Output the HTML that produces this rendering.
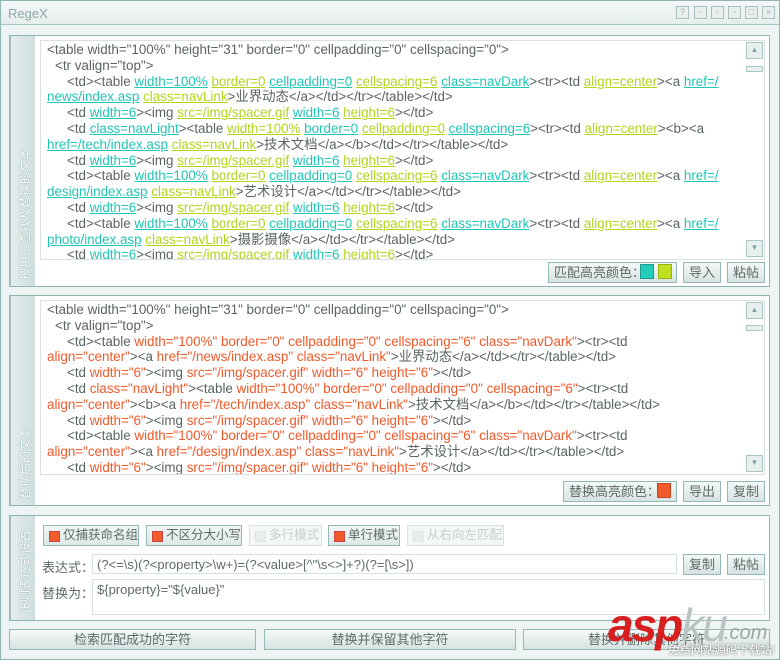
<!DOCTYPE html>
<html><head><meta charset="utf-8"><style>
*{margin:0;padding:0;box-sizing:border-box}
html,body{width:780px;height:660px;overflow:hidden}
body{background:#eef4f3;font-family:"Liberation Sans","Noto Sans CJK SC",sans-serif;color:#5a6462;position:relative}
.win{position:absolute;left:0;top:0;width:780px;height:660px;border:1px solid #8fb5b2}
.title{position:absolute;left:1px;top:1px;width:778px;height:24px;background:linear-gradient(#f4f8f8,#e6eeed);border-bottom:1px solid #a9c6c3;font-size:13px;color:#8aa8a6;padding:5px 7px}
.tb{position:absolute;top:6px;width:13px;height:13px;border:1px solid #a9bfbd;background:#e8efee;font-size:9px;color:#9fb3b1;text-align:center;line-height:11px}
.panel{position:absolute;left:9px;width:761px;background:#fff;border:1px solid #8fb5b2}
.side{position:absolute;left:0;top:0;bottom:0;width:25px;background:linear-gradient(90deg,#cfdedd,#e4eded);border-right:1px solid #a9c6c3;color:#fff;font-size:12px;writing-mode:vertical-rl;text-orientation:sideways;transform:rotate(180deg);text-align:left;padding-top:6px;padding-right:5px;text-shadow:0 0 1px #8aa,0 0 1px #8aa;white-space:nowrap}
.ta{position:absolute;background:#fff;border:1px solid #d5e2e1;overflow:hidden;font-size:13.4px;line-height:15.8px;padding:1px 0 0 6px}
.ta div{white-space:nowrap}
.i1{padding-left:8px}.i2{padding-left:20px}
.c{color:#22c6b6;text-decoration:underline}
.l{color:#b3d41c;text-decoration:underline}
.o{color:#f2592a}
.sb{position:absolute;right:4px;width:18px;background:#fff}
.sbtn{position:absolute;width:17px;height:17px;border:1px solid #a9c6c3;background:#e8f0ef}
.btn{position:absolute;height:21px;border:1px solid #94b8b5;background:linear-gradient(#f4f8f8,#d6e3e2);font-size:13px;color:#5e6b69;text-align:center;line-height:19px;white-space:nowrap}
.chk{position:absolute;top:525px;height:21px;border:1px solid #94b8b5;background:linear-gradient(#f1f6f6,#dde9e8);font-size:12.5px;line-height:19px;padding-left:19px;color:#5e6b69;white-space:nowrap;overflow:hidden}
.chk::before{content:"";position:absolute;left:5px;top:5px;width:9px;height:9px;background:#f15a2a;border:1px solid #c44}
.chk.d{border-color:#d5e2e1;background:#f3f7f7;color:#c4cfce}
.chk.d::before{background:#e8eeee;border-color:#dde5e5}
.lbl{position:absolute;font-size:13px;color:#5e6b69;white-space:nowrap}
</style></head><body>
<div class="win"></div>
<div class="title">RegeX</div>
<div class="tb" style="left:676px">?</div>
<div class="tb" style="left:694px">-</div>
<div class="tb" style="left:711px">▫</div>
<div class="tb" style="left:728px">-</div>
<div class="tb" style="left:745px">□</div>
<div class="tb" style="left:762px">×</div>

<div class="panel" style="top:35px;height:252px"><div class="side">被用于查找及替换的文本</div></div>
<div class="ta" style="left:40px;top:40px;width:725px;height:220px">
<div>&lt;table width="100%" height="31" border="0" cellpadding="0" cellspacing="0"&gt;</div>
<div class="i1">&lt;tr valign="top"&gt;</div>
<div class="i2">&lt;td&gt;&lt;table <span class="c">width=100%</span> <span class="l">border=0</span> <span class="c">cellpadding=0</span> <span class="l">cellspacing=6</span> <span class="c">class=navDark</span>&gt;&lt;tr&gt;&lt;td <span class="l">align=center</span>&gt;&lt;a <span class="c">href=/</span></div>
<div><span class="c">news/index.asp</span> <span class="l">class=navLink</span>&gt;业界动态&lt;/a&gt;&lt;/td&gt;&lt;/tr&gt;&lt;/table&gt;&lt;/td&gt;</div>
<div class="i2">&lt;td <span class="c">width=6</span>&gt;&lt;img <span class="l">src=/img/spacer.gif</span> <span class="c">width=6</span> <span class="l">height=6</span>&gt;&lt;/td&gt;</div>
<div class="i2">&lt;td <span class="c">class=navLight</span>&gt;&lt;table <span class="l">width=100%</span> <span class="c">border=0</span> <span class="l">cellpadding=0</span> <span class="c">cellspacing=6</span>&gt;&lt;tr&gt;&lt;td <span class="l">align=center</span>&gt;&lt;b&gt;&lt;a</div>
<div><span class="c">href=/tech/index.asp</span> <span class="l">class=navLink</span>&gt;技术文档&lt;/a&gt;&lt;/b&gt;&lt;/td&gt;&lt;/tr&gt;&lt;/table&gt;&lt;/td&gt;</div>
<div class="i2">&lt;td <span class="c">width=6</span>&gt;&lt;img <span class="l">src=/img/spacer.gif</span> <span class="c">width=6</span> <span class="l">height=6</span>&gt;&lt;/td&gt;</div>
<div class="i2">&lt;td&gt;&lt;table <span class="c">width=100%</span> <span class="l">border=0</span> <span class="c">cellpadding=0</span> <span class="l">cellspacing=6</span> <span class="c">class=navDark</span>&gt;&lt;tr&gt;&lt;td <span class="l">align=center</span>&gt;&lt;a <span class="c">href=/</span></div>
<div><span class="c">design/index.asp</span> <span class="l">class=navLink</span>&gt;艺术设计&lt;/a&gt;&lt;/td&gt;&lt;/tr&gt;&lt;/table&gt;&lt;/td&gt;</div>
<div class="i2">&lt;td <span class="c">width=6</span>&gt;&lt;img <span class="l">src=/img/spacer.gif</span> <span class="c">width=6</span> <span class="l">height=6</span>&gt;&lt;/td&gt;</div>
<div class="i2">&lt;td&gt;&lt;table <span class="c">width=100%</span> <span class="l">border=0</span> <span class="c">cellpadding=0</span> <span class="l">cellspacing=6</span> <span class="c">class=navDark</span>&gt;&lt;tr&gt;&lt;td <span class="l">align=center</span>&gt;&lt;a <span class="c">href=/</span></div>
<div><span class="c">photo/index.asp</span> <span class="l">class=navLink</span>&gt;摄影摄像&lt;/a&gt;&lt;/td&gt;&lt;/tr&gt;&lt;/table&gt;&lt;/td&gt;</div>
<div class="i2">&lt;td <span class="c">width=6</span>&gt;&lt;img <span class="l">src=/img/spacer.gif</span> <span class="c">width=6</span> <span class="l">height=6</span>&gt;&lt;/td&gt;</div>
</div>
<div class="sb" style="left:745px;top:41px;height:218px"></div>
<div class="sbtn" style="left:746px;top:42px;font-size:8px;text-align:center;color:#7fa5a2;line-height:14px">▲</div>
<div class="sbtn" style="left:746px;top:66px;height:6px"></div>
<div class="sbtn" style="left:746px;top:240px;font-size:8px;text-align:center;color:#7fa5a2;line-height:14px">▼</div>
<div class="btn" style="left:548px;top:262px;width:129px;text-align:left;padding-left:5px">匹配高亮颜色：</div>
<div style="position:absolute;left:640px;top:264px;width:14px;height:15px;background:#22ccb8;border:1px solid #1a9c8e"></div>
<div style="position:absolute;left:658px;top:264px;width:14px;height:15px;background:#c0e020;border:1px solid #98b010"></div>
<div class="btn" style="left:683px;top:262px;width:38px">导入</div>
<div class="btn" style="left:727px;top:262px;width:38px">粘帖</div>

<div class="panel" style="top:295px;height:211px"><div class="side">替换后的文本</div></div>
<div class="ta" style="left:40px;top:300px;width:725px;height:175px">
<div>&lt;table width="100%" height="31" border="0" cellpadding="0" cellspacing="0"&gt;</div>
<div class="i1">&lt;tr valign="top"&gt;</div>
<div class="i2">&lt;td&gt;&lt;table <span class="o">width="100%" border="0" cellpadding="0" cellspacing="6" class="navDark"</span>&gt;&lt;tr&gt;&lt;td</div>
<div><span class="o">align="center"</span>&gt;&lt;a <span class="o">href="/news/index.asp" class="navLink"</span>&gt;业界动态&lt;/a&gt;&lt;/td&gt;&lt;/tr&gt;&lt;/table&gt;&lt;/td&gt;</div>
<div class="i2">&lt;td <span class="o">width="6"</span>&gt;&lt;img <span class="o">src="/img/spacer.gif" width="6" height="6"</span>&gt;&lt;/td&gt;</div>
<div class="i2">&lt;td <span class="o">class="navLight"</span>&gt;&lt;table <span class="o">width="100%" border="0" cellpadding="0" cellspacing="6"</span>&gt;&lt;tr&gt;&lt;td</div>
<div><span class="o">align="center"</span>&gt;&lt;b&gt;&lt;a <span class="o">href="/tech/index.asp" class="navLink"</span>&gt;技术文档&lt;/a&gt;&lt;/b&gt;&lt;/td&gt;&lt;/tr&gt;&lt;/table&gt;&lt;/td&gt;</div>
<div class="i2">&lt;td <span class="o">width="6"</span>&gt;&lt;img <span class="o">src="/img/spacer.gif" width="6" height="6"</span>&gt;&lt;/td&gt;</div>
<div class="i2">&lt;td&gt;&lt;table <span class="o">width="100%" border="0" cellpadding="0" cellspacing="6" class="navDark"</span>&gt;&lt;tr&gt;&lt;td</div>
<div><span class="o">align="center"</span>&gt;&lt;a <span class="o">href="/design/index.asp" class="navLink"</span>&gt;艺术设计&lt;/a&gt;&lt;/td&gt;&lt;/tr&gt;&lt;/table&gt;&lt;/td&gt;</div>
<div class="i2">&lt;td <span class="o">width="6"</span>&gt;&lt;img <span class="o">src="/img/spacer.gif" width="6" height="6"</span>&gt;&lt;/td&gt;</div>
</div>
<div class="sb" style="left:745px;top:301px;height:173px"></div>
<div class="sbtn" style="left:746px;top:302px;font-size:8px;text-align:center;color:#7fa5a2;line-height:14px">▲</div>
<div class="sbtn" style="left:746px;top:325px;height:6px"></div>
<div class="sbtn" style="left:746px;top:455px;font-size:8px;text-align:center;color:#7fa5a2;line-height:14px">▼</div>
<div class="btn" style="left:563px;top:481px;width:114px;text-align:left;padding-left:5px">替换高亮颜色：</div>
<div style="position:absolute;left:657px;top:483px;width:14px;height:15px;background:#f15a2a;border:1px solid #c04420"></div>
<div class="btn" style="left:683px;top:481px;width:38px">导出</div>
<div class="btn" style="left:727px;top:481px;width:38px">复制</div>

<div class="panel" style="top:515px;height:106px"><div class="side">正则表达式设置</div></div>
<div class="chk" style="left:43px;width:96px">仅捕获命名组</div>
<div class="chk" style="left:146px;width:96px">不区分大小写</div>
<div class="chk d" style="left:249px;width:73px">多行模式</div>
<div class="chk" style="left:328px;width:72px">单行模式</div>
<div class="chk d" style="left:407px;width:97px">从右向左匹配</div>
<div class="lbl" style="left:42px;top:557px">表达式：</div>
<div class="ta" style="left:92px;top:554px;width:585px;height:20px;font-size:13px;line-height:18px;padding-left:4px;color:#5e6b69">(?&lt;=\s)(?&lt;property&gt;\w+)=(?&lt;value&gt;[^"\s&lt;&gt;]+?)(?=[\s&gt;])</div>
<div class="btn" style="left:683px;top:554px;width:38px">复制</div>
<div class="btn" style="left:727px;top:554px;width:38px">粘帖</div>
<div class="lbl" style="left:42px;top:583px">替换为：</div>
<div class="ta" style="left:92px;top:579px;width:673px;height:36px;font-size:13px;line-height:18px;padding-left:4px;color:#5e6b69">${property}="${value}"</div>

<div class="btn" style="left:9px;top:629px;width:247px">检索匹配成功的字符</div>
<div class="btn" style="left:264px;top:629px;width:252px">替换并保留其他字符</div>
<div class="btn" style="left:523px;top:629px;width:247px">替换并删除其他字符</div>

<div style="position:absolute;left:608px;top:598px;font:italic bold 46px 'Liberation Sans',sans-serif;color:#d81e1e;letter-spacing:-2px;white-space:nowrap">asp<span style="color:#b9c3c2;font-weight:normal">ku</span></div>
<div style="position:absolute;left:724px;top:622px;font:italic 20px 'Liberation Sans',sans-serif;color:#9aa5a4;white-space:nowrap">.com</div>
<div style="position:absolute;left:668px;top:641px;font:12px 'Liberation Sans','Noto Sans CJK SC',sans-serif;color:#fff;text-shadow:0 0 2px #555;white-space:nowrap;letter-spacing:-0.5px">免费网站源码下载站!</div>
</body></html>
